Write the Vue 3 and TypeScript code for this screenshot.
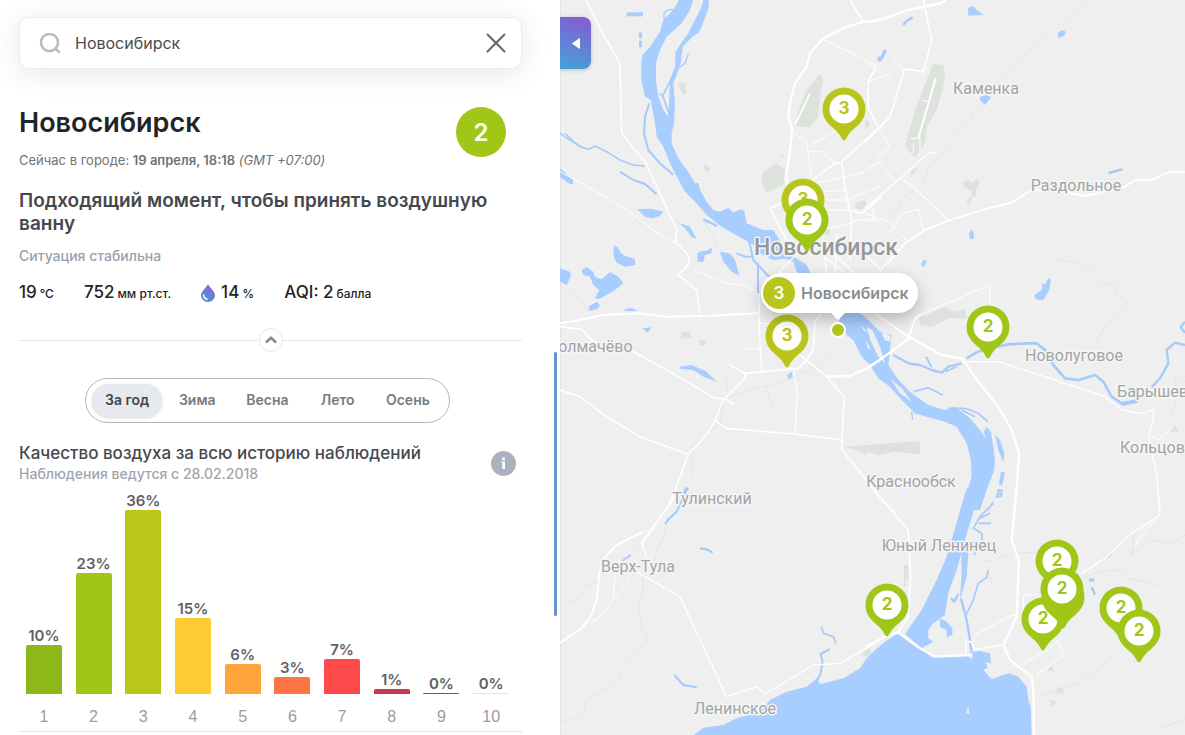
<script setup lang="ts">
import { ref } from 'vue'

interface Bar { level: number; percent: number; height: number; color: string }
interface Line { d: string; w: number }
interface Tile { x: number; y: number; greens: string[]; lakes: string[]; islands: string[]; streams: Line[]; roads: Line[]; borders: string[] }
interface Pin { x: number; y: number; value?: number; color: string }
interface Place { x: number; y: number; name: string }

const query = ref('Новосибирск')
const seasons = ['За год', 'Зима', 'Весна', 'Лето', 'Осень']
const season = ref('За год')

const bars: Bar[] = [
  { level: 1, percent: 10, height: 49, color: '#8cb918' },
  { level: 2, percent: 23, height: 121, color: '#a0c617' },
  { level: 3, percent: 36, height: 184, color: '#bcc61a' },
  { level: 4, percent: 15, height: 76, color: '#ffcb33' },
  { level: 5, percent: 6, height: 30, color: '#ffa43b' },
  { level: 6, percent: 3, height: 17, color: '#ff7443' },
  { level: 7, percent: 7, height: 35, color: '#ff4a4b' },
  { level: 8, percent: 1, height: 5, color: '#c43a50' },
  { level: 9, percent: 0, height: 1, color: '#8a4a58' },
  { level: 10, percent: 0, height: 1, color: '#e4e4e6' },
]

// Tile shapes use three units per map pixel.
const tiles: Tile[] = [
  {
    x: 0, y: 0,
    greens: [
      'M780 222L790 240L780 290L775 350L750 382L705 378L720 320L740 270Z',
      'M605 520L650 490L675 510L670 555L620 577L608 560Z',
      'M352 250L375 250L380 280L370 285Z', 'M430 490L450 505L445 518L432 508Z',
      'M885 610L915 600L920 615L900 630L888 625Z', 'M655 460L670 465L668 473Z',
      'M915 360L930 365L928 382L918 380Z', 'M790 680L812 690L805 708L790 700Z',
    ],
    lakes: [
      'M357 0L340 30L310 60L300 95L270 140L247 165L244 190L244 240L255 290L272 300L285 370L290 410L310 440L330 490L345 520L375 575L405 605L440 645L465 665L485 680L510 695L545 715L580 735L600 760L640 780L690 775L660 735L640 710L610 690L560 670L553 635L545 628L520 637L505 624L480 635L460 630L440 605L420 570L415 548L405 550L385 515L365 490L350 465L335 430L335 400L342 370L345 310L340 250L350 225L362 190L368 140L400 108L415 100L425 80L447 20L445 0L430 0L425 20L405 60L385 100L360 135L347 155L345 200L330 240L328 290L325 350L310 330L295 290L288 240L288 190L300 150L320 110L365 70L390 30L400 0Z',
      'M200 37h49v12h-49Z', 'M237 97h9v18h-9Z', 'M237 122h9v20h-9Z',
      'M0 505L40 540L38 553L25 550L0 530Z',
      'M232 628L275 626L310 635L300 648L275 655L255 650Z',
      'M355 668L390 680L410 716L395 712L375 685Z', 'M953 170h7v14h-7Z',
    ],
    islands: [],
    streams: [
      { d: 'M268 310L255 350L252 400L265 450L300 490L340 525', w: 6 },
      { d: 'M385 162L375 190L355 205', w: 4 },
      { d: 'M340 225L322 260L308 288L320 320L330 347M300 280L312 295', w: 5 },
      { d: 'M345 30Q320 25 312 42Q310 55 316 65', w: 4 },
      { d: 'M0 400L30 420L60 440L85 448L105 438L140 455L180 480L220 495L255 498', w: 5 },
      { d: 'M15 400L45 428L60 438', w: 4 },
      { d: 'M180 515L220 540L255 552L290 583', w: 6 },
      { d: 'M430 658L472 678', w: 7 },
    ],
    roads: [
      { d: 'M78 0L120 85L180 190L185 400L255 485L300 580L350 690L345 725L385 765', w: 5 },
      { d: 'M0 515L100 570L200 630L300 705L345 728', w: 3 },
      { d: 'M870 0L910 65', w: 5 },
      { d: 'M960 60L910 65L850 85L790 115L750 160L740 200L705 250L690 310L685 350L697 385L690 450L678 530L690 600', w: 7 },
      { d: 'M795 120L950 195L925 240L925 320L955 380', w: 3 },
      { d: 'M955 385L840 490L825 490L770 530L740 560', w: 5 },
      { d: 'M700 395L740 430L755 530M745 440L830 390M745 455L785 455L825 490', w: 3 },
      { d: 'M845 490L855 560L875 660L870 780', w: 5 },
      { d: 'M960 485L900 520L770 550M790 575L860 570M960 560L860 600L790 600M790 630L870 630M875 665L940 655L960 665M790 690L870 670', w: 3 },
      { d: 'M965 590L905 640L870 632', w: 5 },
      { d: 'M665 610L630 625L680 720', w: 5 },
      { d: 'M705 375L750 280', w: 5 },
    ],
    borders: ['M360 590L430 660L480 750'],
  },
  {
    x: 305, y: 0,
    greens: [
      'M205 192L235 195L240 240L215 330L185 380L180 430L150 472L120 440L150 330L185 240Z',
      'M292 545L310 540L322 550L330 537L345 540L340 560L332 570L335 588L322 592L318 608L308 612L305 600L318 590L320 570L300 565Z',
      'M135 515L160 500L140 528Z', 'M0 360L15 370L5 385L0 382Z',
    ],
    lakes: [
      'M308 25L325 17L335 30L355 44L310 47Z', 'M578 100L590 90L603 95L598 107L580 114Z',
      'M345 290L365 285L378 292L360 315L345 300Z', 'M312 700L320 688L328 705L325 718L314 716Z',
    ],
    islands: [],
    streams: [
      { d: 'M115 75L125 62L143 53', w: 7 }, { d: 'M45 182L62 150', w: 10 }, { d: 'M730 520L772 508', w: 8 },
    ],
    roads: [
      { d: 'M0 65L20 66L60 55L130 30L180 20L225 10L243 0', w: 8 },
      { d: 'M175 0L180 25L200 120L175 215L118 207L100 270L75 350L0 428', w: 5 },
      { d: 'M80 180L118 207M0 185L35 205L10 245L80 220M10 245L8 320L40 385L75 440L35 475L90 545', w: 3 },
      { d: 'M0 625L90 548L190 460L215 455', w: 4 },
      { d: 'M115 540L150 565L250 662', w: 4 },
      { d: 'M0 640L70 665L125 720M20 620L30 660L0 665M75 700L110 640L160 628L175 690', w: 3 },
      { d: 'M75 780L120 730L180 690L250 662L370 625L440 608L500 570L600 575L655 588L700 580L780 560L810 540L860 540L910 517L960 515', w: 6 },
      { d: 'M212 235L160 415', w: 6 }, { d: 'M170 300L190 305M135 415H165V450M145 430V460', w: 3 },
    ],
    borders: ['M665 0L600 60L510 140L450 185L420 220L340 320L318 345L315 365L270 405L240 455L215 480L190 500L175 550L105 600L100 630L80 630'],
  },
  {
    x: 0, y: 250,
    greens: ['M363 247h30v18h-30Z', 'M418 270h20v15h-20Z'],
    lakes: [
      'M162 -14L172 -10L184 10L195 18L225 28L226 45L195 50L170 38L160 18Z',
      'M412 10L420 5L445 0L455 -8L455 10L435 15L430 35L413 35Z',
      'M480 5L510 10L525 30L535 65L540 78L515 65L490 35Z', 'M0 55L30 65L32 80L20 105L0 95Z',
      'M65 60L80 52L100 65L105 80L125 88L150 66L175 80L190 100L165 120L118 147L105 145L118 120L100 105L90 80L70 75Z',
      'M85 170L110 155L120 165L115 175L90 183Z', 'M190 183Q210 165 232 183Z', 'M248 235L275 232L262 248Z',
      'M358 350L395 345L440 365L470 395L430 380L400 360L362 357Z', 'M682 375L695 365L698 380L685 388Z',
    ],
    islands: [],
    streams: [
      { d: 'M530 10L555 20L580 20M568 -25L580 30L625 78L650 85M594 40V130', w: 6 },
      { d: 'M370 735L382 712', w: 10 },
    ],
    roads: [
      { d: 'M385 15L388 40L355 75L410 120L420 190', w: 5 },
      { d: 'M0 220L60 210L130 195L240 190L320 200L450 197L595 190', w: 6 },
      { d: 'M0 230L65 238L100 275L220 305L320 360L460 442L500 448L522 462L505 455', w: 5 },
      { d: 'M0 420L60 440L140 500L240 560L320 590L385 612', w: 5 },
      { d: 'M555 370L555 385L490 450L465 512L440 555L385 612L345 720L320 780', w: 5 },
      { d: 'M465 512L500 535L700 552L845 570', w: 5 },
      { d: 'M510 345L555 370L715 355L740 330L760 300L765 215L790 180', w: 5 },
      { d: 'M597 130L598 240L605 365', w: 4 },
      { d: 'M555 297h50M600 220L690 225', w: 3 },
      { d: 'M715 310L800 380L852 440L845 600L915 685L960 740', w: 5 },
      { d: 'M700 355L712 430L705 550', w: 3 },
      { d: 'M800 380L870 378L920 355L960 330', w: 7 },
      { d: 'M400 60L500 100L550 105L590 125', w: 3 },
      { d: 'M655 70L740 -20L850 65M790 -30L800 70M830 -50L825 70M830 20L890 75M905 5L960 55', w: 4 },
    ],
    borders: ['M30 120L60 150L85 185', 'M810 310L770 350L680 390L540 430L490 450L480 520L400 590L395 680', 'M615 410L640 475', 'M495 370L505 430'],
  },
  {
    x: 305, y: 250,
    greens: ['M160 195L185 198L205 185L240 170L265 185L300 178L305 205L250 205L230 215L200 230L165 225Z', 'M-65 590L165 573L165 613L90 605L40 615L10 605L0 618L-10 605Z', 'M915 545L930 525L940 545Z'],
    lakes: [
      'M-355 -60L-275 -60L-235 5L-175 45L-160 75L-50 170L0 200L45 245L80 255L75 300L70 345L100 390L140 430L190 465L240 480L270 470L310 500L345 540L365 570L390 620L388 660L365 720L345 780L285 780L305 730L320 680L318 630L305 580L275 530L240 515L200 505L150 490L110 450L75 410L40 385L15 345L-10 320L-35 270L-55 255L-80 215L-65 190L-165 90L-205 65L-215 35L-255 20L-310 -20Z',
      'M508 135L530 120L532 98L540 105L550 83L557 90L553 120L535 150L512 148Z', 'M168 48L175 30L185 32L178 50Z',
      'M390 553L405 570L418 610L415 637L400 600Z', 'M408 665L420 665L412 705L402 703Z',
      'M355 545L365 530L378 545L385 590L388 612L375 600Z',
    ],
    islands: ['M5 230L22 240L45 290L60 340L40 320L18 275Z', 'M75 385L110 415L140 455L105 430Z', 'M50 248Q82 248 76 274L60 272Z', 'M-15 225L15 250L-5 240Z', 'M2 270L18 300L8 295Z'],
    streams: [
      { d: 'M85 315L130 340L165 345L200 360L230 368L250 350L290 340', w: 7 },
      { d: 'M240 365L275 350', w: 5 },
      { d: 'M305 325L335 307L370 295L430 283L490 280L515 280L540 300L565 345L600 385L640 390L690 375L715 395L740 440L770 460L815 452', w: 8 },
      { d: 'M770 465L818 455', w: 6 },
      { d: 'M860 412L885 385L910 340L905 300L930 278L960 285M960 215L947 232L960 248', w: 7 },
      { d: 'M183 320L200 352', w: 6 }, { d: 'M145 425L190 413L233 435', w: 5 },
      { d: 'M140 485L143 510', w: 4 }, { d: 'M250 475L300 475L340 490L368 515M290 480L330 500', w: 5 },
      { d: 'M395 745L398 720L410 720L405 742L392 740M385 755L368 780', w: 4 },
    ],
    roads: [
      { d: 'M0 360L100 290L130 265L150 205L175 190', w: 7 },
      { d: 'M40 75L55 50L90 20', w: 4 },
      { d: 'M30 190L130 260L230 315L290 325L340 395L400 470L440 540L462 610L455 720L448 780', w: 7 },
      { d: 'M150 210L175 190L375 105V165', w: 3 },
      { d: 'M290 335L400 335L600 400L720 440L770 480L830 490L865 480L865 510L850 560L875 670L885 780', w: 4 },
      { d: 'M850 555L880 570L925 530', w: 3 }, { d: 'M25 720L90 790', w: 5 },
    ],
    borders: ['M580 30L620 35L680 60L710 105L750 100L755 130L790 155L720 230L680 300', 'M930 380L935 440L920 500', 'M915 390L935 375L960 395'],
  },
  {
    x: 0, y: 490,
    greens: ['M910 485L930 475L935 490L920 500L908 498Z'],
    lakes: [],
    islands: [],
    streams: [
      { d: 'M375 10L350 65L325 88L315 103', w: 6 }, { d: 'M420 175L440 178L458 188', w: 7 },
      { d: 'M188 212L212 195', w: 5 }, { d: 'M343 555L370 585L410 592', w: 6 },
      { d: 'M785 412L790 430L820 440L828 460', w: 5 },
      { d: 'M810 477L782 492L788 515L782 550L768 580', w: 6 },
    ],
    roads: [
      { d: 'M345 20L245 160', w: 6 },
      { d: 'M250 125L170 165L135 200L118 250L110 330L95 375L65 415L0 458', w: 6 },
      { d: 'M245 160L260 200M230 245L290 280L360 320L420 450L500 620L590 590L615 612L760 525L840 520L960 450', w: 4 },
      { d: 'M165 250L160 330L110 390L80 400M210 265L165 325', w: 3 },
    ],
    borders: ['M0 350L60 320L80 285L110 275L240 170', 'M250 260L250 300L235 340L245 410L265 450L240 480L185 540L180 570L130 600L80 630L70 680L0 700', 'M315 110L310 145L290 180L285 210'],
  },
  {
    x: 305, y: 490,
    greens: ['M117 225h12v65h-12Z', 'M580 588L602 605L572 612Z', 'M553 630L578 635L560 650Z', 'M560 525L567 545L548 542Z', 'M725 195L742 188L735 205Z'],
    lakes: [
      'M-520 740L-485 713L-425 705L-385 685L-315 665L-285 630L-235 605L-175 590L-145 565L-135 583L-65 565L-15 535L5 505L30 480L60 455L100 428L160 470L200 500L310 498L320 510L325 485L345 483L375 490L378 520L362 515L368 535L355 540L380 567L430 550L460 560L485 590L490 630L497 650L500 740Z',
      'M305 -5L280 80L245 200L215 270L170 360L120 432L170 475L205 455L190 445L190 420L205 400L240 375L250 310L275 240L300 150L330 50L365 -5Z',
      'M225 385L245 395L262 415L262 435L245 442L245 420L225 412Z',
      'M672 265h16v10h-16Z',
      'M288 170L310 190L305 260L285 330L290 250Z',
    ],
    islands: ['M304 668L310 648L313 672Z'],
    streams: [
      { d: 'M288 325L305 390L315 450L320 490', w: 7 }, { d: 'M370 240L365 262L340 280L325 330L303 375', w: 5 },
      { d: 'M385 40L345 80L325 115L350 130L352 150M378 100L340 100M375 70L345 85M325 155L330 195', w: 5 },
      { d: 'M258 325L268 335L280 312', w: 7 }, { d: 'M405 0L400 18M410 0V20', w: 4 },
      { d: 'M680 292L690 315', w: 7 },
    ],
    roads: [
      { d: 'M35 10L130 120L137 260L130 380L98 428', w: 5 },
      { d: 'M0 472L70 435L100 428L160 472L210 500L320 495', w: 7 },
      { d: 'M303 490V455L318 455L330 478L415 465', w: 5 },
      { d: 'M455 -5L440 150L462 210L455 380L415 465L435 510L500 560L505 600L507 740', w: 7 },
      { d: 'M330 435L430 380L455 375M475 375V315H520M465 525L540 485L580 455L595 490L590 500L515 555', w: 3 },
      { d: 'M878 0L885 75L800 130L720 205L650 250', w: 4 }, { d: 'M880 75L810 165M125 265V295', w: 3 },
    ],
    borders: ['M525 620L640 580L720 520L750 480', 'M880 720L960 685', 'M790 195L860 150L920 160L960 135', 'M650 265L700 245L760 240L790 265L880 285', 'M350 210L380 215L440 190L520 185', 'M370 240L380 280', 'M810 120L800 200'],
  },
]

const places: Place[] = [
  { x: 426, y: 94, name: 'Каменка' }, { x: 516, y: 191, name: 'Раздольное' },
  { x: 514, y: 361, name: 'Новолуговое' }, { x: 597, y: 397, name: 'Барышево' },
  { x: 597, y: 453, name: 'Кольцово' }, { x: 31, y: 352, name: 'Толмачёво' },
  { x: 152, y: 504, name: 'Тулинский' }, { x: 351, y: 487, name: 'Краснообск' },
  { x: 379, y: 551, name: 'Юный Ленинец' }, { x: 78, y: 572, name: 'Верх-Тула' },
  { x: 175, y: 714, name: 'Ленинское' },
]

const lime = '#a0c617'
const olive = '#b9c51a'
const pins: Pin[] = [
  { x: 284, y: 109, value: 3, color: olive },
  { x: 243, y: 200, value: 3, color: olive },
  { x: 247, y: 220, value: 2, color: lime },
  { x: 227, y: 336, value: 3, color: olive },
  { x: 428, y: 327, value: 2, color: lime },
  { x: 327, y: 605, value: 2, color: lime },
  { x: 497, y: 561, value: 2, color: lime },
  { x: 483, y: 619, value: 2, color: lime },
  { x: 503, y: 597, color: lime },
  { x: 502, y: 589, value: 2, color: lime },
  { x: 561, y: 608, value: 2, color: lime },
  { x: 579, y: 631, value: 2, color: lime },
]
</script>

<template>
  <div class="app">
    <main class="panel">
      <form class="search" role="search" @submit.prevent>
        <svg class="search-icon" viewBox="0 0 22 22" aria-hidden="true">
          <circle cx="10.500" cy="10.500" r="8.500" /><path d="M16.500 16.500L20 20" />
        </svg>
        <input v-model="query" type="text" aria-label="Поиск города" />
        <button class="clear" type="button" aria-label="Очистить" @click="query = ''">
          <svg viewBox="0 0 20 20"><path d="M1.500 1.500L18.500 18.500M18.500 1.500L1.500 18.500" /></svg>
        </button>
      </form>

      <header class="city">
        <div>
          <h1>Новосибирск</h1>
          <p class="time">Сейчас в городе: <b>19 апреля, 18:18</b> <i>(GMT +07:00)</i></p>
        </div>
        <span class="score">2</span>
      </header>

      <h2>Подходящий момент, чтобы принять воздушную ванну</h2>
      <p class="status">Ситуация стабильна</p>

      <ul class="metrics">
        <li>19<small>°C</small></li>
        <li>752<small>мм рт.ст.</small></li>
        <li>
          <svg viewBox="0 0 14 18" aria-hidden="true">
            <defs><linearGradient id="drop" x1="0.600" y1="0" x2="0.300" y2="1"><stop offset="0" stop-color="#8f65cf" /><stop offset="1" stop-color="#4d91d6" /></linearGradient></defs>
            <path fill="url(#drop)" d="M7 0C8 3 14 7 14 11.500A7 6.500 0 0 1 0 11.500C0 7 6 3 7 0Z" />
            <path d="M2.500 11Q3 14.500 6 15.300" fill="none" stroke="#fff" stroke-width="1.500" stroke-linecap="round" />
          </svg>
          14<small>%</small>
        </li>
        <li>AQI: 2<small>балла</small></li>
      </ul>

      <div class="divider">
        <button type="button" aria-label="Свернуть">
          <svg viewBox="0 0 12 8"><path d="M1 6.500L6 1.800L11 6.500" /></svg>
        </button>
      </div>

      <nav class="tabs" aria-label="Период">
        <button v-for="s in seasons" :key="s" type="button" :class="{ active: s === season }" @click="season = s">{{ s }}</button>
      </nav>

      <section class="history">
        <div class="history-head">
          <div>
            <h3>Качество воздуха за всю историю наблюдений</h3>
            <p>Наблюдения ведутся с 28.02.2018</p>
          </div>
          <button type="button" class="info" aria-label="Справка">
            <svg viewBox="0 0 25 25"><circle cx="12.500" cy="12.500" r="12.500" /><circle class="mark" cx="12.500" cy="7.800" r="1.600" /><path class="mark" d="M10.500 10.500H14V18H11.300V12H10.500Z" /></svg>
          </button>
        </div>
        <ol class="chart">
          <li v-for="b in bars" :key="b.level">
            <b>{{ b.percent }}%</b>
            <span class="bar" :style="{ height: b.height + 'px', background: b.color }"></span>
            <span class="level">{{ b.level }}</span>
          </li>
        </ol>
      </section>
      <span class="thumb"></span>
    </main>

    <section class="map" aria-label="Карта">
      <svg class="ground" viewBox="0 0 625 735" aria-hidden="true">
        <g v-for="(t, i) in tiles" :key="'g' + i" :transform="`translate(${t.x} ${t.y}) scale(0.33333)`">
          <path v-for="d in t.greens" :key="d" class="green" :d="d" />
        </g>
        <g v-for="(t, i) in tiles" :key="'w' + i" :transform="`translate(${t.x} ${t.y}) scale(0.33333)`">
          <path v-for="d in t.borders" :key="d" class="border" :d="d" />
          <path v-for="d in t.lakes" :key="d" class="water" :d="d" />
          <path v-for="d in t.islands" :key="d" class="island" :d="d" />
          <path v-for="s in t.streams" :key="s.d" class="stream" :d="s.d" :stroke-width="s.w" />
        </g>
        <g v-for="(t, i) in tiles" :key="'r' + i" :transform="`translate(${t.x} ${t.y}) scale(0.33333)`">
          <path v-for="r in t.roads" :key="r.d" class="road" :d="r.d" :stroke-width="r.w" />
        </g>
        <text v-for="p in places" :key="p.name" class="place" :x="p.x" :y="p.y">{{ p.name }}</text>
        <text class="place capital" x="266" y="255">Новосибирск</text>
      </svg>

      <button
        v-for="(p, i) in pins" :key="i" type="button" class="pin"
        :style="{ left: p.x - 22 + 'px', top: p.y - 22 + 'px', color: p.color }"
      >
        <svg viewBox="0 0 44 56" aria-hidden="true">
          <path fill="currentColor" d="M22 0.500A21.500 21.500 0 0 1 43.500 22C43.500 30 39 36 33 41C28 45 26 48 24.200 51.500Q22 55.500 19.800 51.500C18 48 16 45 11 41C5 36 0.500 30 0.500 22A21.500 21.500 0 0 1 22 0.500Z" />
          <circle cx="22" cy="22" r="14.500" fill="#fff" />
        </svg>
        <span v-if="p.value">{{ p.value }}</span>
      </button>

      <div class="popup"><span>3</span>Новосибирск</div>
      <span class="spot"></span>

      <button type="button" class="collapse" aria-label="Скрыть панель">
        <svg viewBox="0 0 8 11"><path d="M7 0.500Q8 0 8 1V10Q8 11 7 10.500L0.500 6Q0 5.500 0.500 5Z" /></svg>
      </button>
    </section>
  </div>
</template>

<style>
body { margin: 0; }
</style>

<style scoped>
.app { display: flex; height: 100vh; overflow: hidden; font-family: Inter, "Open Sans", sans-serif; color: #232426; background: #fff; }
h1, h2, h3, p, ul, ol { margin: 0; padding: 0; list-style: none; }
button { padding: 0; border: 0; background: none; font: inherit; color: inherit; cursor: pointer; }
svg { display: block; }

.panel { position: relative; flex: 0 1 560px; min-width: 0; box-sizing: border-box; padding: 17px 38px 0 19px; }
.search { display: flex; align-items: center; height: 52px; padding: 0 15px 0 19px; box-sizing: border-box; border: 1px solid #e9edee; border-radius: 10px; background: #fff; box-shadow: 0 4px 28px rgba(30, 50, 50, 0.12); }
.search-icon { width: 22px; height: 22px; margin-right: 14px; fill: none; stroke: #b8bcc0; stroke-width: 2.500; stroke-linecap: round; }
.search input { flex: 1; min-width: 0; border: 0; padding: 0; outline: 0; background: none; font: 400 16px/24px Inter, sans-serif; color: #494b4e; }
.clear svg { width: 20px; height: 20px; stroke: #62666a; stroke-width: 2; stroke-linecap: round; }

.city { display: flex; justify-content: space-between; align-items: flex-start; margin-top: 37px; padding-right: 16px; }
h1 { font-size: 27px; line-height: 34px; font-weight: 600; }
.time { margin-top: 10px; font-size: 13px; line-height: 20px; color: #6e7277; }
.time b { font-weight: 600; }
.score { display: grid; place-items: center; width: 50px; height: 50px; border-radius: 50%; background: #a0c617; color: #fff; font-size: 24px; font-weight: 600; margin-top: 1px; }
h2 { margin-top: 19px; font-size: 19px; line-height: 23px; font-weight: 600; color: #45484d; }
.status { margin-top: 11px; font-size: 14px; line-height: 20px; font-weight: 500; color: #98a1af; }
.metrics { display: flex; gap: 30px; margin-top: 14px; font-size: 17px; line-height: 24px; font-weight: 500; white-space: nowrap; }
.metrics li { display: flex; align-items: baseline; gap: 3px; }
.metrics small { font-size: 12px; font-weight: 500; }
.metrics svg { width: 14px; height: 18px; align-self: center; margin-right: 3px; }

.divider { display: flex; justify-content: center; align-items: center; height: 24px; margin-top: 22px; background: linear-gradient(#e6e9ec, #e6e9ec) center / 100% 1px no-repeat; }
.divider button { display: grid; place-items: center; box-sizing: border-box; width: 24px; height: 24px; border: 1px solid #e6e9ec; border-radius: 50%; background: #fff; }
.divider svg { width: 12px; height: 8px; fill: none; stroke: #85898e; stroke-width: 2.500; }

.tabs { display: grid; grid-template-columns: repeat(5, 1fr); width: 365px; height: 45px; box-sizing: border-box; margin: 26px 0 0 66px; padding: 5px 6px; border: 1px solid #b2b6bc; border-radius: 23px; }
.tabs button { padding-bottom: 2px; border-radius: 17px; font-size: 14px; font-weight: 600; color: #777c82; }
.tabs .active { background: #e6eaee; color: #43474d; box-shadow: 0 1px 3px rgba(40, 60, 80, 0.2); }

.history { margin-top: 19px; border-bottom: 1px solid #dfe5e9; }
.history-head { display: flex; justify-content: space-between; align-items: center; padding-right: 6px; }
h3 { font-size: 17px; line-height: 22px; font-weight: 500; color: #45484d; }
.history p { font-size: 14px; line-height: 20px; font-weight: 500; color: #a0a5ac; }
.info svg { width: 25px; height: 25px; fill: #a9b2bf; }
.info .mark { fill: #fff; }
.chart { display: grid; grid-template-columns: repeat(10, 1fr); margin-top: 7px; padding-right: 6px; }
.chart li { display: flex; flex-direction: column; justify-content: flex-end; align-items: center; height: 240px; }
.chart b { font-size: 15px; line-height: 19px; font-weight: 600; color: #5f6164; }
.bar { width: 36px; border-radius: 2px 2px 0 0; flex: none; }
.level { height: 37px; padding-top: 11px; box-sizing: border-box; font: 400 16px/24px "Liberation Sans", Arial, sans-serif; color: #999ca1; }
.thumb { position: absolute; right: 3px; top: 352px; width: 3px; height: 264px; border-radius: 2px; background: #6495cc; }

.map { position: relative; flex: 1; min-width: 0; overflow: hidden; background: #efefef; box-shadow: inset 1px 0 0 #e0e2e4; }
.ground { width: 625px; height: 735px; overflow: visible; }
.green { fill: #dde2dc; }
.water { fill: #a8cdff; }
.island { fill: #efefef; }
.stream { fill: none; stroke: #a6cafa; stroke-linejoin: round; }
.border { fill: none; stroke: #dedfdf; stroke-width: 2; }
.road { fill: none; stroke: #fff; stroke-linejoin: round; }
.place { font: 400 16px Roboto, sans-serif; fill: #a3a4a5; text-anchor: middle; paint-order: stroke; stroke: #f4f5f5; stroke-width: 3px; stroke-linejoin: round; }
.capital { font-size: 23px; font-weight: 500; fill: #969798; }

.pin { position: absolute; width: 44px; height: 56px; }
.pin svg { width: 44px; height: 56px; }
.pin span { position: absolute; inset: 0 0 auto; line-height: 42px; font-size: 17px; font-weight: 700; text-align: center; }
.popup { position: absolute; left: 201px; top: 273px; display: flex; align-items: center; gap: 6px; height: 40px; padding: 0 9px 0 2px; border-radius: 20px; background: #fff; font-size: 16px; font-weight: 600; color: #8c8d8f; box-shadow: 0 6px 16px rgba(0, 0, 0, 0.25); }
.popup::after { content: ""; position: absolute; left: 69px; top: 39px; border: 8px solid transparent; border-top-color: #fff; border-bottom: 0; }
.popup span { display: grid; place-items: center; width: 32px; height: 32px; border-radius: 50%; background: #b9c51a; color: #fff; font-size: 17px; }
.spot { position: absolute; left: 270px; top: 322px; width: 12px; height: 12px; border: 2px solid #fff; border-radius: 50%; background: #b0c617; }
.collapse { position: absolute; left: 0; top: 17px; display: grid; place-items: center; width: 31px; height: 52px; border-radius: 0 8px 8px 0; background: linear-gradient(200deg, #8759d3, #45a2d7); box-shadow: 0 1px 4px rgba(0, 0, 0, 0.2); }
.collapse svg { width: 8px; height: 11px; fill: #fff; }
</style>
